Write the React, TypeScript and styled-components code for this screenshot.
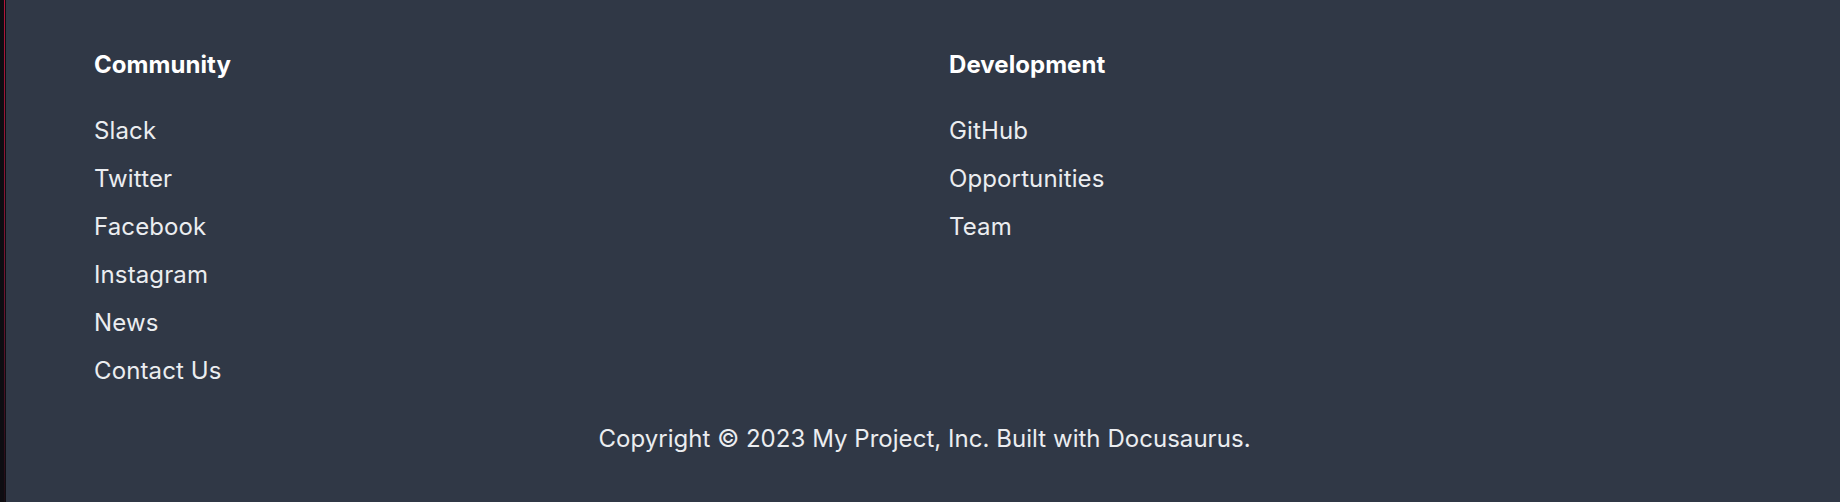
import styled, { createGlobalStyle } from 'styled-components';

const GlobalStyle = createGlobalStyle`
  html,
  body {
    margin: 0;
    padding: 0;

    background: #303846;
  }

  * {
    box-sizing: border-box;
  }
`;

const StyledPage = styled.div`
  display: flex;

  width: 100%;
  min-height: 502px;

  font-family: Inter, 'Noto Sans', sans-serif;
`;

const EdgeStrip = styled.div`
  flex: 0 0 6px;

  background:
    linear-gradient(to right, #0e0d12 0 4px, transparent 4px 5px, #0e0d12 5px 6px),
    linear-gradient(to bottom, #b3173d 0%, #6a1430 60%, #1a0d14 100%);
`;

const StyledFooter = styled.footer`
  flex: 1;

  padding: 50px 0 39px;

  color: #ebedf0;

  background: #303846;
`;

const LinksRow = styled.div`
  display: grid;
  grid-template-columns: 855px 1fr;

  padding-left: 88px;
`;

const Column = styled.div`
  display: flex;
  flex-direction: column;
`;

const ColumnTitle = styled.div`
  margin-bottom: 27px;

  font: normal normal 700 24px/30px Inter, 'Noto Sans', sans-serif;
  letter-spacing: 0.05px;
  color: #ffffff;
`;

const LinkList = styled.ul`
  margin: 0;
  padding: 0;

  list-style: none;
`;

const LinkItem = styled.li`
  font: normal normal 400 24px/48px Inter, 'Noto Sans', sans-serif;
  letter-spacing: 0.12px;
`;

const FooterLink = styled.a`
  color: #ebedf0;
  text-decoration: none;
`;

const Copyright = styled.div`
  margin-top: 20px;
  padding-left: 3px;

  font: normal normal 400 24px/48px Inter, 'Noto Sans', sans-serif;
  letter-spacing: 0.04px;
  color: #ebedf0;
  text-align: center;
`;

const columns = [
  {
    title: 'Community',
    links: ['Slack', 'Twitter', 'Facebook', 'Instagram', 'News', 'Contact Us'],
  },
  {
    title: 'Development',
    links: ['GitHub', 'Opportunities', 'Team'],
  },
];

const App = () => {
  return (
    <StyledPage>
      <GlobalStyle />
      <EdgeStrip />
      <StyledFooter>
        <LinksRow>
          {columns.map((col) => (
            <Column key={col.title}>
              <ColumnTitle>{col.title}</ColumnTitle>
              <LinkList>
                {col.links.map((link) => (
                  <LinkItem key={link}>
                    <FooterLink href='#'>{link}</FooterLink>
                  </LinkItem>
                ))}
              </LinkList>
            </Column>
          ))}
        </LinksRow>
        <Copyright>Copyright © 2023 My Project, Inc. Built with Docusaurus.</Copyright>
      </StyledFooter>
    </StyledPage>
  );
};

export default App;
